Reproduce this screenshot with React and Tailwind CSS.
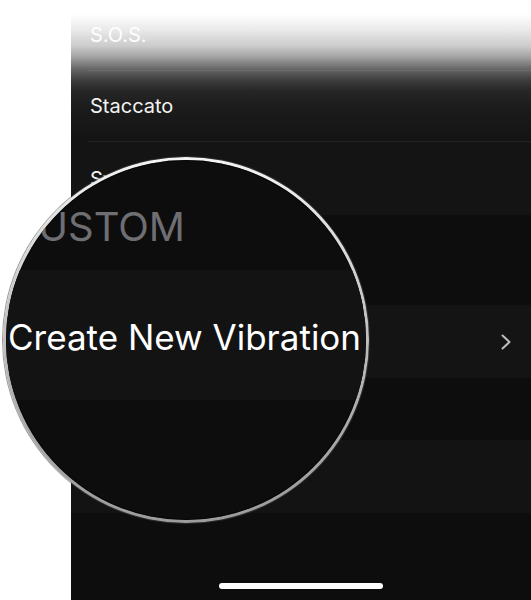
import React from 'react';

const font = "font-['Inter','Liberation_Sans',sans-serif]";

// plain settings row; `divider` draws the inset hairline under it
const Row = ({ label, height, divider = false, chevron = false }) => (
  <div className={`flex ${height} shrink-0 bg-[#141414] pl-[17px]`}>
    <div
      className={`flex flex-1 items-center justify-between pr-[20px] ${
        divider ? 'border-b border-[#222222]' : ''
      }`}
    >
      <span className="pl-[2px] text-[20px] leading-none text-[#f2f2f2]">{label}</span>
      {chevron && (
        <svg width="10" height="16" viewBox="0 0 10 16" fill="none">
          <polyline
            points="1.5,1.5 8.5,8 1.5,14.5"
            stroke="#bdbdbd"
            strokeWidth="2"
            strokeLinecap="round"
            strokeLinejoin="round"
          />
        </svg>
      )}
    </div>
  </div>
);

// zoomed lens sitting over the list
const Magnifier = () => (
  <div className="absolute left-[3px] top-[157px] h-[366px] w-[366px] rounded-full bg-[linear-gradient(180deg,#f4f4f4_0%,#c8c8c8_40%,#a8a8a8_75%,#9c9c9c_100%)] p-[3px] shadow-[0_0_0_1px_rgba(70,70,70,0.55)]">
    <div className="flex h-full w-full flex-col overflow-hidden rounded-full bg-[#0d0d0d] shadow-[inset_0_0_0_1px_rgba(0,0,0,0.6)]">
      <div className="h-[110px] shrink-0 pl-[3px] pt-[47px]">
        <span className="text-[40px] leading-none text-[#6e6e73]">CUSTOM</span>
      </div>
      <div className="h-[130px] shrink-0 bg-[#131313] pl-[2px] pt-[50px]">
        <span className="whitespace-nowrap text-[35px] leading-none text-white">Create New Vibration</span>
      </div>
      <div className="flex-1" />
    </div>
  </div>
);

export default function App() {
  return (
    <div className={`relative flex h-[600px] w-[531px] overflow-hidden bg-white ${font}`}>
      <div className="w-[71px] shrink-0 bg-white" />

      <div className="flex flex-1 flex-col bg-[#0d0d0d]">
        <Row label="S.O.S." height="h-[71px]" divider />
        <Row label="Staccato" height="h-[71px]" divider />
        <Row label="Symphony" height="h-[73px]" />

        {/* section header, sits under the lens */}
        <div className="h-[90px] shrink-0" />

        <Row label="" height="h-[73px]" chevron />

        <div className="h-[62px] shrink-0" />
        <div className="h-[73px] shrink-0 bg-[#131313]" />

        <div className="flex flex-1 items-end justify-center pb-[11px]">
          <div className="h-[6px] w-[164px] rounded-full bg-white" />
        </div>
      </div>

      {/* white fade over the top of the screen */}
      <div className="pointer-events-none absolute inset-x-0 top-0 h-[140px] bg-[linear-gradient(180deg,rgba(255,255,255,1)_0%,rgba(255,255,255,1)_10%,rgba(255,255,255,0.9)_22%,rgba(255,255,255,0.78)_33%,rgba(255,255,255,0.6)_41%,rgba(255,255,255,0.36)_49%,rgba(255,255,255,0.18)_57%,rgba(255,255,255,0.08)_65%,rgba(255,255,255,0.03)_77%,rgba(255,255,255,0)_100%)]" />

      <Magnifier />
    </div>
  );
}
